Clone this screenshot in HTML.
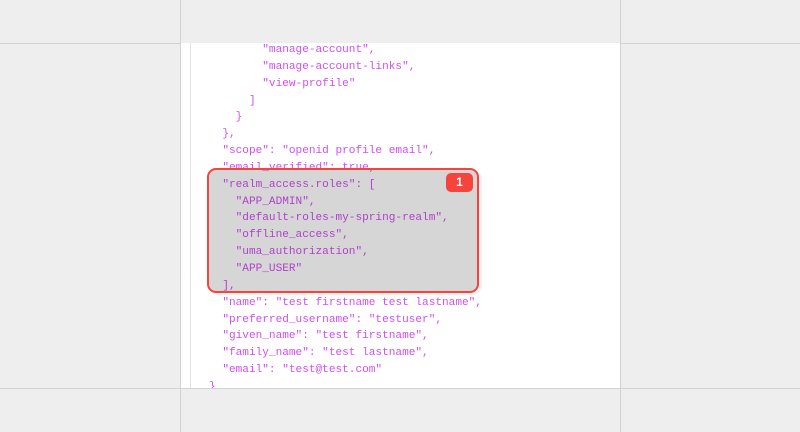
<!DOCTYPE html>
<html><head><style>
html,body{margin:0;padding:0;}
body{width:800px;height:432px;background:#eeeeee;position:relative;overflow:hidden;font-family:"Liberation Mono",monospace;}
.vl{position:absolute;top:0;bottom:0;width:1px;background:#d2d2d2;z-index:2;}
.hl{position:absolute;left:0;right:0;height:1px;background:#d2d2d2;}
.panel{position:absolute;left:180px;top:43px;width:440px;height:345px;background:#fff;overflow:hidden;}
.gut{position:absolute;left:10px;top:0;bottom:0;width:1px;background:#e4e4e4;}
pre{position:absolute;left:29px;top:-1px;margin:0;font-family:"Liberation Mono",monospace;font-size:11.1px;line-height:16.84px;color:#d04ff0;}
.box{position:absolute;left:207px;top:168px;width:268px;height:121px;border:2px solid #f5443e;border-radius:9px;background:rgba(0,0,0,0.16);box-shadow:3px 2px 0 rgba(0,0,0,0.05);}
.badge{position:absolute;left:446px;top:173px;width:27px;height:19px;background:#f5443e;border-radius:5px;color:#fff;font-family:"Liberation Sans",sans-serif;font-weight:bold;font-size:12px;text-align:center;line-height:19px;}
</style></head><body>
<div class="hl" style="top:43px"></div>
<div class="hl" style="top:388px"></div>
<div class="panel"><div class="gut"></div>
<pre>        "manage-account",
        "manage-account-links",
        "view-profile"
      ]
    }
  },
  "scope": "openid profile email",
  "email_verified": true,
  "realm_access.roles": [
    "APP_ADMIN",
    "default-roles-my-spring-realm",
    "offline_access",
    "uma_authorization",
    "APP_USER"
  ],
  "name": "test firstname test lastname",
  "preferred_username": "testuser",
  "given_name": "test firstname",
  "family_name": "test lastname",
  "email": "test@test.com"
}</pre></div>
<div class="vl" style="left:180px"></div>
<div class="vl" style="left:620px"></div>
<div class="box"></div>
<div class="badge">1</div>
</body></html>
